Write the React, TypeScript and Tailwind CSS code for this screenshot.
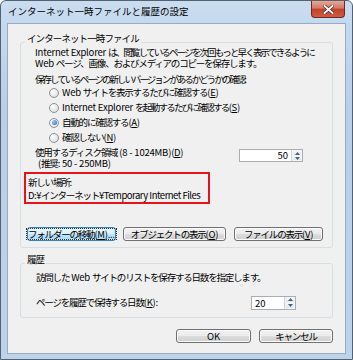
import type { ReactNode } from 'react'

// ── Small building blocks ─────────────────────────────────────────────────────

// half-width runs keep near-normal spacing; the Japanese text around them is tightened
function L({ children, tight = false }: { children: ReactNode; tight?: boolean }) {
  return <span className={tight ? 'tracking-[-0.5px]' : 'tracking-[-0.2px]'}>{children}</span>
}

function Key({ k }: { k: string }) {
  return (
    <span className="tracking-[-0.3px]">
      (<u>{k}</u>)
    </span>
  )
}

function Radio({ checked = false, children }: { checked?: boolean; children: ReactNode }) {
  return (
    <div className="flex h-[15px] items-center pl-[28px]">
      <span className="flex h-[10px] w-[10px] shrink-0 items-center justify-center rounded-full border border-[#8f9196] bg-[radial-gradient(circle_at_35%_35%,#ffffff,#d4d6d9)]">
        {checked && (
          <span className="h-[5px] w-[5px] rounded-full bg-[radial-gradient(circle_at_35%_35%,#8fd0ff,#1f62b8)]" />
        )}
      </span>
      <span className="ml-[3px]">{children}</span>
    </div>
  )
}

function SpinArrows() {
  return (
    <div className="flex w-[11px] flex-col gap-px border-l border-[#c9d3dd] bg-[#f2f5f8] p-px">
      <span className="flex flex-1 items-center justify-center rounded-[1px] bg-[linear-gradient(#f6f8fa,#dde4ea)]">
        <svg width="5" height="3" viewBox="0 0 5 3">
          <path d="M0 3 L2.5 0 L5 3 Z" fill="#4a5e80" />
        </svg>
      </span>
      <span className="flex flex-1 items-center justify-center rounded-[1px] bg-[linear-gradient(#f6f8fa,#dde4ea)]">
        <svg width="5" height="3" viewBox="0 0 5 3">
          <path d="M0 0 L2.5 3 L5 0 Z" fill="#4a5e80" />
        </svg>
      </span>
    </div>
  )
}

function Button({
  width,
  focused = false,
  children,
}: {
  width: string
  focused?: boolean
  children: ReactNode
}) {
  return (
    <div
      className={
        focused
          ? `${width} flex h-[14px] items-center justify-center rounded-[3px] border border-[#3c7fb1] bg-[linear-gradient(#eaf6fd_0%,#d9f0fc_50%,#bee6fd_50%,#a7d9f5_100%)] shadow-[inset_0_0_0_1px_#c5e9fb]`
          : `${width} flex h-[14px] items-center justify-center rounded-[3px] border border-[#707070] bg-[linear-gradient(#f2f2f2_0%,#ebebeb_50%,#dddddd_50%,#cfcfcf_100%)] shadow-[inset_0_0_0_1px_#fbfbfb]`
      }
    >
      {focused ? (
        <span className="border border-dotted border-[#333] px-px leading-[10px]">{children}</span>
      ) : (
        <span className="leading-[12px]">{children}</span>
      )}
    </div>
  )
}

function GroupBox({ label, className, children }: { label: string; className: string; children: ReactNode }) {
  return (
    <div className={`relative w-[313px] rounded-[3px] border border-[#d5dfe5] ${className}`}>
      <span className="absolute left-[4px] top-[-11px] bg-[#f0f0f0] px-[2px] leading-[12px] tracking-[-0.9px]">
        {label}
      </span>
      {children}
    </div>
  )
}

// ── Dialog ────────────────────────────────────────────────────────────────────

export default function App() {
  return (
    <div className="h-[360px] w-[353px] overflow-hidden bg-white font-['Noto_Sans_CJK_JP','Noto_Sans',sans-serif] text-black">
      <div className="flex h-[360px] w-[353px] flex-col rounded-t-[6px] border border-[#54626f] bg-[linear-gradient(#c9dcf0,#b9cfe8_30%,#bdd3ea)]">
        {/* Title bar */}
        <div className="flex h-[22px] shrink-0 items-start">
          <span className="ml-[7px] mt-[4px] whitespace-nowrap text-[9.5px] leading-[13px]">
            インターネット一時ファイルと履歴の設定
          </span>
          <div className="ml-auto mr-[7px] flex h-[17px] w-[34px] items-center justify-center rounded-b-[4px] border border-t-0 border-[#6b2b24] bg-[linear-gradient(#e9a797_0%,#d47765_45%,#c0412c_50%,#d25a3f_100%)]">
            <svg width="11" height="9" viewBox="0 0 11 9">
              <path d="M1.5 1 L9.5 8 M9.5 1 L1.5 8" stroke="#3a1a16" strokeWidth="3.2" strokeLinecap="square" />
              <path d="M1.5 1 L9.5 8 M9.5 1 L1.5 8" stroke="#ffffff" strokeWidth="2" strokeLinecap="square" />
            </svg>
          </div>
        </div>

        {/* Client area */}
        <div className="mx-[6px] mb-[5px] flex-1 whitespace-nowrap border border-[#97abc1] bg-[#f0f0f0] pl-[12px] text-[9.5px] tracking-[-1.2px]">
          <GroupBox label="インターネット一時ファイル" className="mt-[18px] pb-[6px]">
            <div className="pl-[14px] pt-[4px] leading-[11px]">
              <div className="tracking-[-1.85px]">
                <L>Internet Explorer </L>は、閲覧しているページを次回もっと早く表示できるように
              </div>
              <div>
                <L>Web </L>ページ、画像、およびメディアのコピーを保存します。
              </div>
            </div>
            <div className="mt-[4px] pl-[14px] leading-[12px] tracking-[-2px]">
              保存しているページの新しいバージョンがあるかどうかの確認:
            </div>
            <Radio>
              <L>Web </L>サイトを表示するたびに確認する<Key k="E" />
            </Radio>
            <Radio>
              <L>Internet Explorer </L>
              <span className="tracking-[-1.7px]">を起動するたびに確認する</span>
              <Key k="S" />
            </Radio>
            <Radio checked>
              自動的に確認する<Key k="A" />
            </Radio>
            <Radio>
              確認しない<Key k="N" />
            </Radio>

            <div className="mt-[2px] flex items-start pl-[14px]">
              <div className="leading-[11px]">
                <div>
                  使用するディスク領域<L> (8 - 1024MB)</L>
                  <Key k="D" />
                </div>
                <div className="pl-[3px]">
                  <L>(</L>推奨<L>: 50 - 250MB)</L>
                </div>
              </div>
              <div className="ml-auto mr-[29px] mt-[2px] flex h-[13px] w-[64px] border border-[#abadb3] bg-white tracking-normal">
                <span className="flex-1 pr-[3px] text-right leading-[11px]">50</span>
                <SpinArrows />
              </div>
            </div>

            <div className="ml-[3px] mt-[3px] w-[186px] border-2 border-[#e3151b] pl-[2px] pt-[2px] leading-[13px]">
              <div>新しい場所:</div>
              <div>
                <L tight>D:¥</L>インターネット<L tight>¥Temporary Internet Files</L>
              </div>
            </div>

            <div className="ml-[6px] mt-[23px] flex gap-[7px]">
              <Button width="w-[89px]" focused>
                フォルダーの移動<Key k="M" />
                <L>...</L>
              </Button>
              <Button width="w-[103px]">
                オブジェクトの表示<Key k="O" />
              </Button>
              <div className="ml-px">
                <Button width="w-[89px]">
                  ファイルの表示<Key k="V" />
                </Button>
              </div>
            </div>
          </GroupBox>

          <GroupBox label="履歴" className="mt-[15px] pb-[7px]">
            <div className="pl-[15px] pt-[7px] leading-[12px]">
              訪問した<L> Web </L>サイトのリストを保存する日数を指定します。
            </div>
            <div className="mt-[12px] flex h-[15px] items-center pl-[15px]">
              <span>
                ページを履歴で保持する日数<Key k="K" />:
              </span>
              <div className="ml-auto mr-[36px] flex h-[14px] w-[45px] border border-[#abadb3] bg-white tracking-normal">
                <span className="flex-1 pl-[3px] leading-[12px]">20</span>
                <SpinArrows />
              </div>
            </div>
          </GroupBox>

          <div className="mt-[11px] flex w-[313px] justify-end gap-[8px]">
            <Button width="w-[75px]">
              <L>OK</L>
            </Button>
            <Button width="w-[74px]">キャンセル</Button>
          </div>
        </div>
      </div>
    </div>
  )
}
